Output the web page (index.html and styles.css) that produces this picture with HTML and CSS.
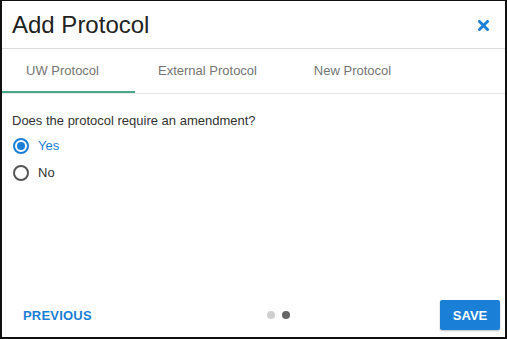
FILE: index.html
```html
<!DOCTYPE html>
<html>
<head>
<meta charset="utf-8">
<link rel="stylesheet" href="styles.css">
</head>
<body>
<div class="dialog">
  <div class="header">
    <h1 class="title">Add Protocol</h1>
    <button class="close" aria-label="Close">
      <svg width="11" height="11" viewBox="0 0 11 11"><path d="M1.5 1.5 L9.5 9.5 M9.5 1.5 L1.5 9.5" stroke="#1a7fd6" stroke-width="2.8" stroke-linecap="square"/></svg>
    </button>
  </div>
  <div class="tabs">
    <div class="tab active">UW Protocol</div>
    <div class="tab">External Protocol</div>
    <div class="tab">New Protocol</div>
  </div>
  <div class="content">
    <p class="question">Does the protocol require an amendment?</p>
    <label class="radio checked"><span class="circle"></span><span class="label">Yes</span></label>
    <label class="radio"><span class="circle"></span><span class="label">No</span></label>
  </div>
  <div class="footer">
    <button class="prev">PREVIOUS</button>
    <div class="dots"><span class="dot"></span><span class="dot on"></span></div>
    <button class="save">SAVE</button>
  </div>
</div>
</body>
</html>
```
FILE: styles.css
```css
* { box-sizing: border-box; }
html, body { margin: 0; padding: 0; background: #fff; }
body { font-family: "Liberation Sans", Arial, sans-serif; }
.dialog {
  width: 507px;
  height: 339px;
  border: 2px solid #111;
  border-top-width: 1px;
  display: flex;
  flex-direction: column;
  overflow: hidden;
}
.header {
  height: 48px;
  border-bottom: 1px solid #dcdcdc;
  display: flex;
  align-items: center;
  justify-content: space-between;
  padding: 0 16px 0 10px;
}
.title {
  margin: 0;
  font-size: 24px;
  font-weight: normal;
  color: #222;
  line-height: 28px;
  margin-top: 1px;
}
.close {
  border: 0;
  background: none;
  padding: 0;
  width: 11px;
  height: 11px;
  margin-top: 2px;
  display: flex;
}
.tabs {
  height: 45px;
  display: flex;
  margin-left: -12px;
  border-bottom: 1px solid #e6e6e6;
}
.tab {
  width: 145px;
  text-align: center;
  font-size: 13px;
  color: #757575;
  line-height: 44px;
  height: 44px;
}
.tab.active {
  border-bottom: 2px solid #48a98a;
}
.content {
  flex: 1;
  padding: 19px 10px 0;
}
.question {
  margin: 0 0 3px;
  font-size: 13px;
  line-height: 16px;
  color: #333;
}
.radio {
  display: flex;
  align-items: center;
  height: 27px;
  font-size: 13px;
  color: #333;
}
.circle {
  width: 16px;
  height: 16px;
  border: 2px solid #555;
  border-radius: 50%;
  margin-left: 1px;
  margin-right: 9px;
  display: flex;
  align-items: center;
  justify-content: center;
}
.radio.checked .circle { border-color: #1a7fd6; }
.radio.checked .circle::after {
  content: "";
  width: 8px;
  height: 8px;
  border-radius: 50%;
  background: #1a7fd6;
}
.radio.checked .label { color: #1a7fd6; }
.footer {
  display: flex;
  align-items: flex-end;
  justify-content: space-between;
  padding: 0 5px 7px 11px;
}
.prev {
  border: 0;
  background: none;
  font-family: inherit;
  font-weight: bold;
  font-size: 13px;
  letter-spacing: 0.2px;
  color: #1a7fd6;
  padding: 0 10px;
  height: 30px;
  width: 105px;
  text-align: left;
}
.dots {
  display: flex;
  align-items: center;
  height: 30px;
  gap: 7px;
  margin-left: -1px;
}
.dot {
  width: 8px;
  height: 8px;
  border-radius: 50%;
  background: #cfcfcf;
}
.dot.on { background: #666; }
.save {
  border: 0;
  background: #1a7fd6;
  color: #fff;
  font-family: inherit;
  font-weight: bold;
  font-size: 13px;
  width: 60px;
  height: 30px;
  border-radius: 2px;
  box-shadow: 0 1px 2px rgba(0,0,0,0.25);
  padding: 0;
}
```
